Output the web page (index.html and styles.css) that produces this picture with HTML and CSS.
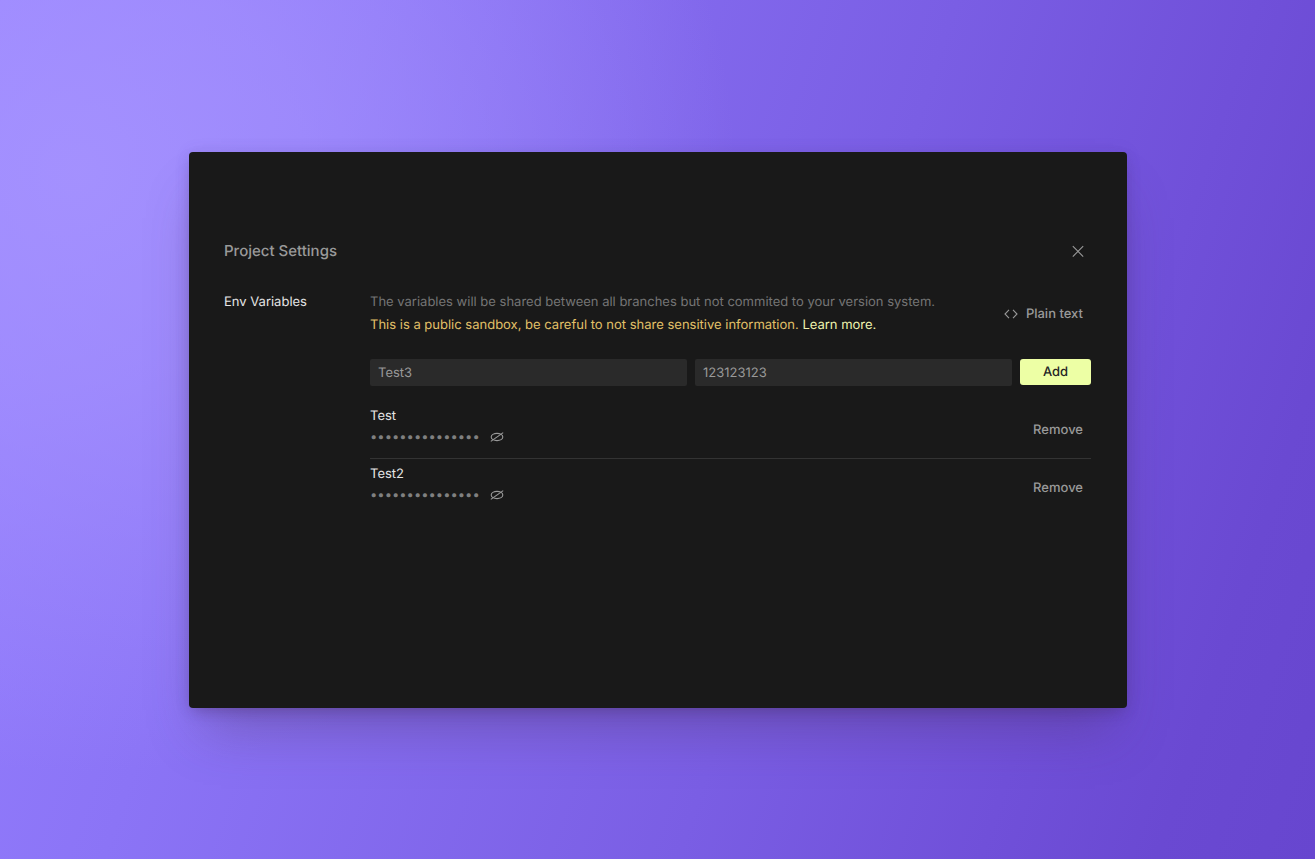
FILE: index.html
```html
<!DOCTYPE html>
<html lang="en">
<head>
<meta charset="utf-8">
<meta name="viewport" content="width=device-width, initial-scale=1">
<title>Project Settings</title>
<link rel="stylesheet" href="styles.css">
</head>
<body>
<main class="panel">
  <header class="panel-header">
    <h1 class="title">Project Settings</h1>
    <button class="icon-button" type="button" aria-label="Close">
      <svg width="12" height="12" viewBox="0 0 12 12" fill="none" stroke="currentColor" stroke-width="1.1"><path d="M.8 1.2l10.4 10.4M11.2 1.2.8 11.6"/></svg>
    </button>
  </header>
  <div class="columns">
    <nav class="sidebar"><a class="nav-link" href="#env">Env Variables</a></nav>
    <section class="content" id="env">
      <div class="intro">
        <div class="intro-text">
          <p class="muted">The variables will be shared between all branches but not commited to your version system.</p>
          <p class="warning">This is a public sandbox, be careful to not share sensitive information. <a class="learn" href="#learn">Learn more.</a></p>
        </div>
        <button class="text-button" type="button">
          <svg width="14" height="10" viewBox="0 0 14 10" fill="none" stroke="currentColor" stroke-width="1.1"><path d="M5 .9 1 5 5 9.1M9 .9 13 5 9 9.1"/></svg>
          Plain text
        </button>
      </div>
      <form class="add-form">
        <input class="field" type="text" aria-label="Name" value="Test3">
        <input class="field" type="text" aria-label="Value" value="123123123">
        <button class="add-button" type="button">Add</button>
      </form>
      <ul class="variables">
        <li class="variable">
          <div class="entry">
            <div class="name">Test</div>
            <div class="secret">
              <span class="dots">•••••••••••••••</span>
              <button class="icon-button" type="button" aria-label="Show value of Test">
                <svg width="14" height="10" viewBox="0 0 14 10" fill="none" stroke="currentColor" stroke-width="1.1"><ellipse cx="7" cy="5" rx="5.8" ry="3.6"/><path d="M.8 9.4 13.2.6"/></svg>
              </button>
            </div>
          </div>
          <button class="text-button" type="button">Remove</button>
        </li>
        <li class="variable">
          <div class="entry">
            <div class="name">Test2</div>
            <div class="secret">
              <span class="dots">•••••••••••••••</span>
              <button class="icon-button" type="button" aria-label="Show value of Test2">
                <svg width="14" height="10" viewBox="0 0 14 10" fill="none" stroke="currentColor" stroke-width="1.1"><ellipse cx="7" cy="5" rx="5.8" ry="3.6"/><path d="M.8 9.4 13.2.6"/></svg>
              </button>
            </div>
          </div>
          <button class="text-button" type="button">Remove</button>
        </li>
      </ul>
    </section>
  </div>
</main>
</body>
</html>
```
FILE: styles.css
```css
* { box-sizing: border-box; }

body {
  margin: 0;
  min-height: 100vh;
  padding: 152px 188px 151px 189px;
  display: flex;
  background:
    radial-gradient(ellipse 50% 70% at 6% 20%, rgba(168, 150, 255, .8) 0%, rgba(168, 150, 255, .6) 35%, rgba(168, 150, 255, 0) 100%),
    linear-gradient(108deg, #957fff 0%, #8b74f6 24%, #7a5ee4 60%, #7050d9 79%, #6a49d2 90%, #6746cf 100%);
  color: #e5e5e5;
  font: 13px/22px Inter, sans-serif;
  text-rendering: geometricPrecision;
}

button, input { font: inherit; text-rendering: inherit; }
h1, p, ul { margin: 0; padding: 0; }
svg { display: block; }

.panel {
  flex: 1;
  min-width: 0;
  padding: 87px 36px 35px 35px;
  border-radius: 4px;
  background: #191919;
  box-shadow: 0 34px 50px -14px rgba(75, 50, 100, .36), 0 6px 14px -4px rgba(60, 35, 90, .35), 0 0 16px rgba(90, 65, 170, .1);
}

.panel-header {
  display: flex;
  align-items: center;
  justify-content: space-between;
  margin-bottom: 28px;
  padding-right: 7px;
}

.title {
  color: #999;
  font-size: 15px;
  line-height: 24px;
  font-weight: 500;
}

.icon-button {
  padding: 0;
  border: 0;
  background: none;
  color: #999;
}

.columns {
  display: grid;
  grid-template-columns: 146px 1fr;
}

.nav-link { color: #e5e5e5; text-decoration: none; }

.intro {
  display: flex;
  align-items: center;
  justify-content: space-between;
  margin-bottom: 22px;
  line-height: 23px;
}

.muted { color: #757575; }
.warning { color: #e2c068; }
.learn { color: #f0f5ae; text-decoration: none; }

.text-button {
  display: flex;
  align-items: center;
  gap: 8px;
  padding: 0 8px;
  border: 0;
  background: none;
  color: #999;
  font-weight: 500;
}

.add-form {
  display: grid;
  grid-template-columns: 1fr 1fr 71px;
  gap: 8px;
  margin-bottom: 15px;
}

.field {
  min-width: 0;
  height: 27px;
  padding: 0 8px;
  border: 0;
  border-radius: 2px;
  background: #2a2a2a;
  color: #999;
}

.add-button {
  height: 26px;
  padding: 0;
  border: 0;
  border-radius: 3px;
  background: #edffa5;
  color: #252525;
  font-weight: 500;
}

.variables { list-style: none; }

.variable {
  display: flex;
  align-items: center;
  justify-content: space-between;
}

.variable + .variable { border-top: 1px solid #333; }
.entry { padding: 4px 0 11px; }

.secret {
  display: flex;
  align-items: center;
  gap: 10px;
  line-height: 20px;
}

.dots { color: #808080; }
```
